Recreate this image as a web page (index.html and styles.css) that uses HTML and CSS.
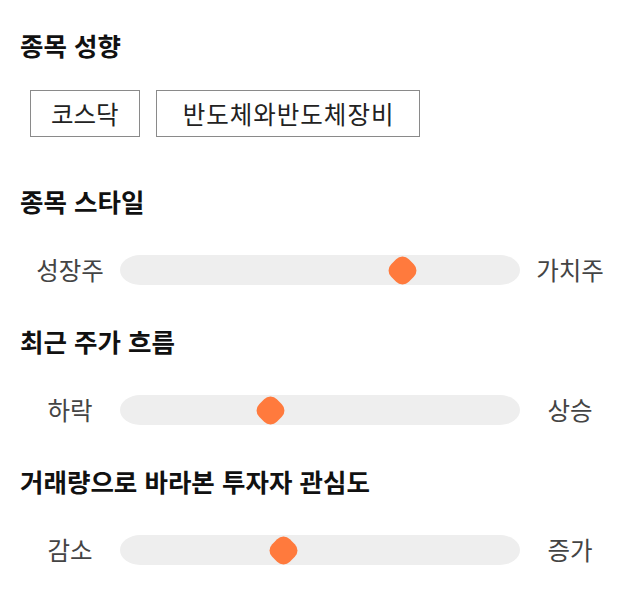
FILE: index.html
```html
<!DOCTYPE html>
<html lang="ko">
<head>
<meta charset="utf-8">
<link rel="stylesheet" href="styles.css">
</head>
<body>
<section class="sec sec-first">
  <h2 class="title">종목 성향</h2>
  <div class="tags">
    <span class="tag">코스닥</span>
    <span class="tag tag-long">반도체와반도체장비</span>
  </div>
</section>
<section class="sec">
  <h2 class="title">종목 스타일</h2>
  <div class="scale">
    <span class="lbl">성장주</span>
    <div class="track"><span class="thumb" style="left: 70.5%"></span></div>
    <span class="lbl">가치주</span>
  </div>
</section>
<section class="sec">
  <h2 class="title">최근 주가 흐름</h2>
  <div class="scale">
    <span class="lbl">하락</span>
    <div class="track"><span class="thumb" style="left: 37.5%"></span></div>
    <span class="lbl">상승</span>
  </div>
</section>
<section class="sec">
  <h2 class="title">거래량으로 바라본 투자자 관심도</h2>
  <div class="scale">
    <span class="lbl">감소</span>
    <div class="track"><span class="thumb" style="left: 40.75%"></span></div>
    <span class="lbl">증가</span>
  </div>
</section>
</body>
</html>
```
FILE: styles.css
```css
html, body {
  margin: 0;
  background: #fff;
}
body {
  padding: 0 20px;
  font-family: "Noto Sans CJK KR", "Noto Sans", sans-serif;
  color: #111;
}
.sec {
  display: flex;
  flex-direction: column;
}
.title {
  margin: 0;
  font-size: 25.5px;
  font-weight: 700;
  line-height: 36px;
  color: #111;
}
.sec-first {
  padding-top: 27px;
}
.tags {
  display: flex;
  gap: 16px;
  padding: 27px 10px 0;
}
.tag {
  display: inline-flex;
  align-items: center;
  justify-content: center;
  height: 47px;
  box-sizing: border-box;
  padding: 0 20px;
  border: 1px solid #8a8a8a;
  font-size: 24.5px;
  color: #222;
}
.tag-long {
  padding: 0 25px 0 26px;
  letter-spacing: 1px;
}
.sec-first + .sec {
  padding-top: 46px;
}
.sec-first + .sec ~ .sec {
  padding-top: 38px;
}
.scale {
  display: flex;
  align-items: center;
  margin-top: 36px;
}
.lbl {
  width: 100px;
  text-align: center;
  font-size: 24.5px;
  color: #444;
  line-height: 30px;
}
.track {
  position: relative;
  flex: 1;
  height: 30px;
  border-radius: 20px / 15px;
  background: #eeeeee;
}
.thumb {
  position: absolute;
  top: 50%;
  width: 25px;
  height: 25px;
  margin: -12.5px 0 0 -12.5px;
  background: #ff7a3d;
  border-radius: 9px;
  transform: rotate(45deg);
}
```
